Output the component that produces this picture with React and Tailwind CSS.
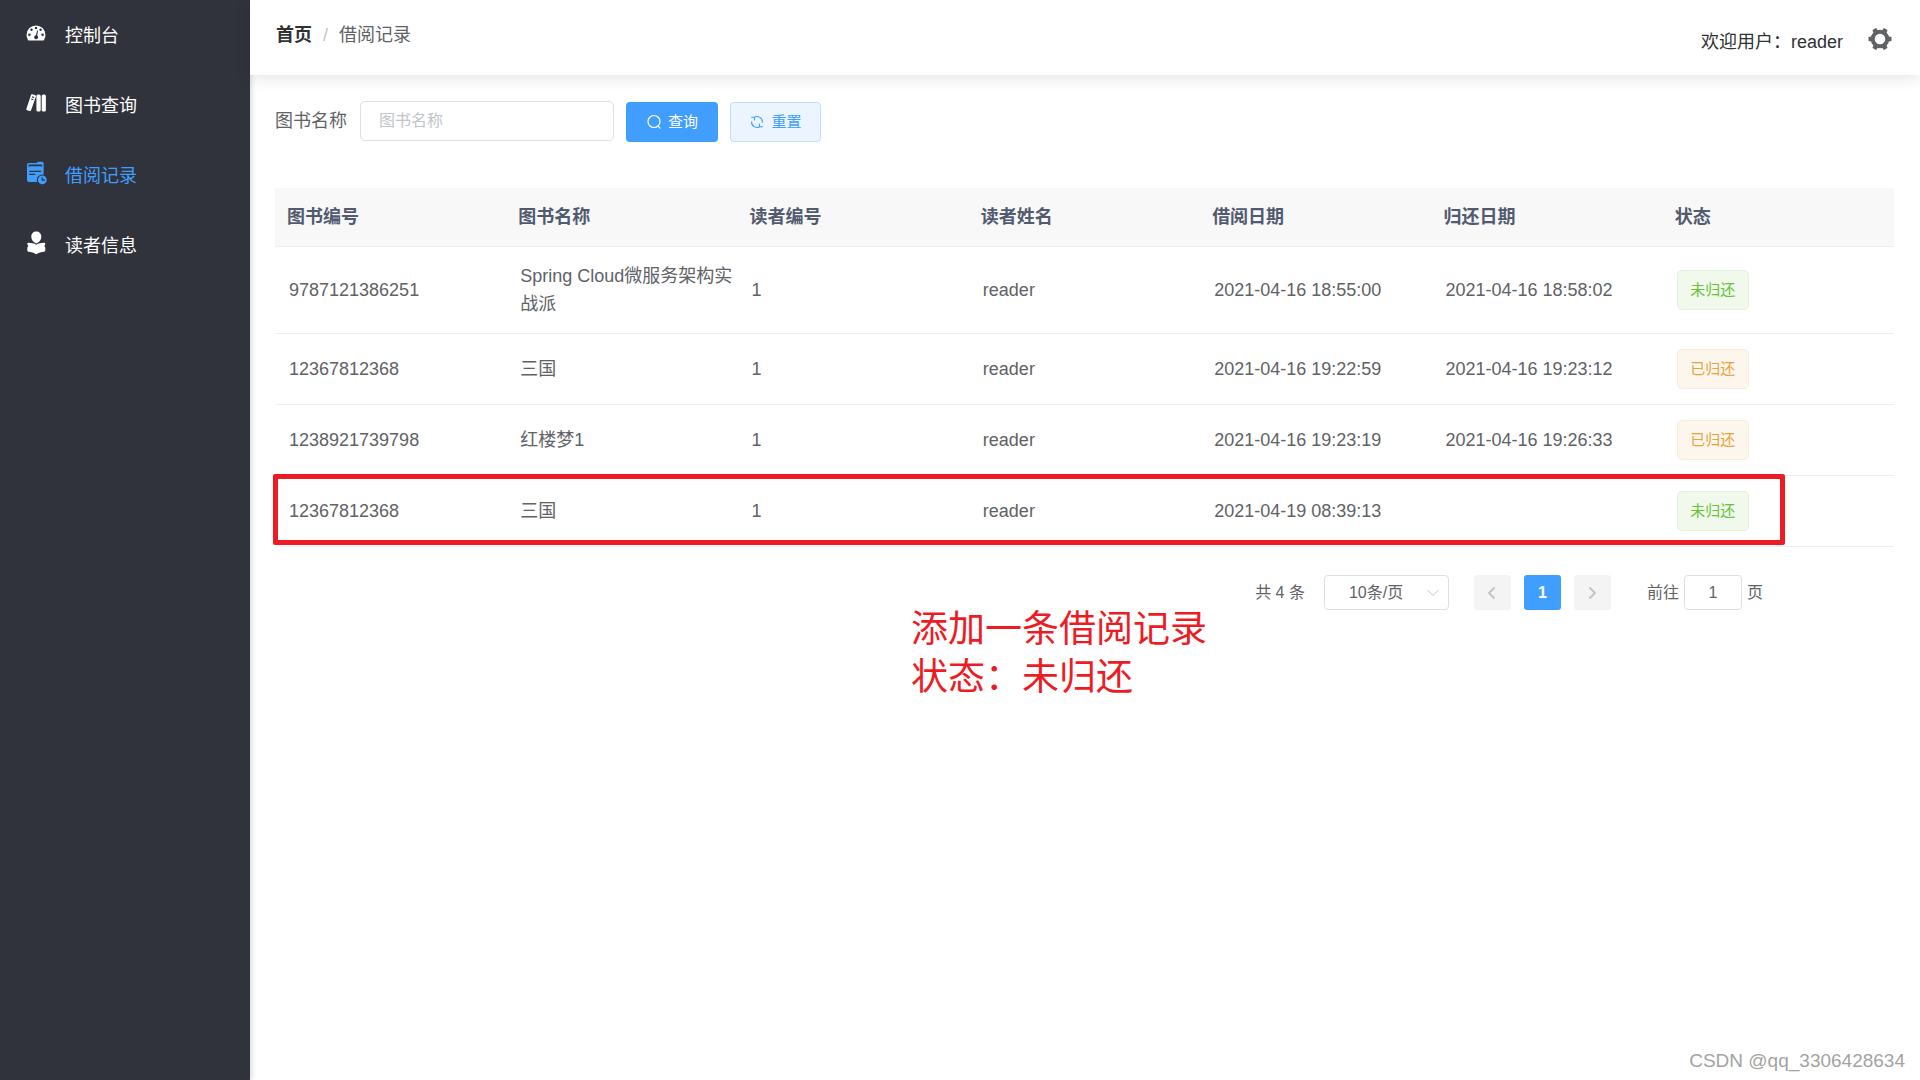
import React from "react";

function GaugeIcon() {
  return (
    <svg viewBox="0 0 20 20" className="h-5 w-5" fill="currentColor" aria-hidden="true">
      <path
        fillRule="evenodd"
        d="M10 2.4a9.4 9.4 0 0 0-9.4 9.3c0 2 .5 3.700 1.500 5.200.3.400.6.600 1.100.6h13.600c.5 0 .8-.2 1.100-.6 1-1.500 1.500-3.200 1.500-5.200A9.400 9.400 0 0 0 10 2.400ZM10 3.700a1.200 1.200 0 1 1 0 2.400 1.200 1.200 0 0 1 0-2.400ZM5.500 5.500a1.200 1.200 0 1 1 0 2.400 1.200 1.200 0 0 1 0-2.400ZM14.600 5.500a1.200 1.200 0 1 1 0 2.400 1.200 1.200 0 0 1 0-2.400ZM3.400 10.400a1.300 1.300 0 1 1 0 2.600 1.300 1.300 0 0 1 0-2.600ZM16.600 10.400a1.300 1.300 0 1 1 0 2.600 1.300 1.300 0 0 1 0-2.600ZM11.100 7.600l.9.200-.8 4.700a2 2 0 1 1-1.300-.3Z"
      />
    </svg>
  );
}

function BooksIcon() {
  return (
    <svg viewBox="0 0 20 20" className="h-5 w-5" fill="currentColor" aria-hidden="true">
      <path
        fillRule="evenodd"
        d="M6.300 1.200l3.100 1c.5.2.7.5.6 1L5.200 17.100c-.2.800-.7 1.100-1.400.9l-2.700-.8C.4 17 .2 16.500.4 15.800L5 1.900c.2-.6.600-.9 1.300-.7ZM6.200 3.200l-.4 1.200 2.100.7.400-1.200ZM5.400 5.600l-.3.900 2.100.7.300-.9Z"
      />
      <rect x="10.400" y="1.600" width="4.300" height="17" rx="1.500" />
      <rect x="15.700" y="1.600" width="4.200" height="17" rx="1.500" />
    </svg>
  );
}

function RecordIcon() {
  return (
    <svg viewBox="0 0 21 24" className="h-6 w-[21px]" aria-hidden="true">
      <path
        fill="currentColor"
        fillRule="evenodd"
        d="M3 2h7.500l1.500-1.200h4c1 0 1.600.6 1.600 1.500V21H3.200C1.900 21 1 20.300 1 19V4.300C1 2.900 1.700 2 3 2ZM3.600 3.600c-.8 0-1.100.5-1.100 1.400v1.600c.3-.9 1-1.300 2-1.300h10.600c.5 0 .9.200 1.100.4V4.900c0-.8-.5-1.300-1.300-1.300ZM3.200 9.700v1.300h12V9.700ZM3.200 12.700v1.200h6v-1.200Z"
      />
      <circle cx="16.300" cy="18.900" r="5.500" fill="#30333c" />
      <path
        fill="currentColor"
        fillRule="evenodd"
        d="M16.300 14.500a4.400 4.400 0 1 1 0 8.800 4.400 4.400 0 0 1 0-8.800Zm-.7 1.800v3.500h3.400v-1.200h-2.200v-2.300Z"
      />
    </svg>
  );
}

function ReaderIcon() {
  return (
    <svg viewBox="0 0 20 24" className="h-6 w-5" fill="currentColor" aria-hidden="true">
      <path d="M10.300.6c2.900 0 5 2.100 5 5 0 2.500-1.100 4.400-2.500 5.500l-2.500 1.500-2.500-1.500C6.400 10 5.300 8.100 5.300 5.600c0-2.900 2.100-5 5-5Z" />
      <path d="M2.600 11.800c3 .1 5.500.6 7.700 1.900 2.200-1.300 4.700-1.800 7.700-1.900.8 0 1.300.4 1.300 1.200 0 .9-.9 1-.9 1.800s.9 1 .9 2v2.700c0 .7-.4 1.100-1.100 1.300-3 .3-5.500.9-7.900 2.400-2.400-1.500-4.900-2.100-7.900-2.400-.7-.2-1.100-.6-1.100-1.300v-2.700c0-1 .9-1.200.9-2s-.9-.9-.9-1.800c0-.8.500-1.200 1.300-1.200Z" />
    </svg>
  );
}

function GearIcon() {
  return (
    <svg viewBox="0 0 24 24" className="h-6 w-6" aria-hidden="true">
      <g fill="currentColor">
        <rect x="0.500" y="9.700" width="23" height="4.600" rx="0.800" />
        <rect x="0.500" y="9.700" width="23" height="4.600" rx="0.800" transform="rotate(60 12 12)" />
        <rect x="0.500" y="9.700" width="23" height="4.600" rx="0.800" transform="rotate(120 12 12)" />
      </g>
      <circle cx="12" cy="12" r="7.300" fill="white" stroke="currentColor" strokeWidth="4" />
    </svg>
  );
}

function SearchIcon() {
  return (
    <svg viewBox="0 0 16 16" className="h-4 w-4" fill="none" stroke="currentColor" strokeWidth="1.200" strokeLinecap="round" aria-hidden="true">
      <circle cx="8" cy="7.500" r="6" />
      <path d="M12 12l2 2.200" />
    </svg>
  );
}

function RefreshIcon() {
  return (
    <svg viewBox="0 0 16 16" className="h-4 w-4" fill="none" stroke="currentColor" strokeWidth="1.100" strokeLinecap="round" strokeLinejoin="round" aria-hidden="true">
      <path d="M5.300 3.300A5.400 5.400 0 0 1 13.400 8.300M2.600 3.300h2.900v2.600M10.700 12.700A5.400 5.400 0 0 1 2.600 7.700M13.400 12.700h-2.900v-2.600" />
    </svg>
  );
}

function Chevron({ d, className }) {
  return (
    <svg viewBox="0 0 16 16" className={className} fill="none" stroke="currentColor" strokeLinecap="round" strokeLinejoin="round" aria-hidden="true">
      <path d={d} />
    </svg>
  );
}

const NAV = [
  { label: "控制台", Icon: GaugeIcon },
  { label: "图书查询", Icon: BooksIcon },
  { label: "借阅记录", Icon: RecordIcon, active: true },
  { label: "读者信息", Icon: ReaderIcon },
];

const COLUMNS = ["图书编号", "图书名称", "读者编号", "读者姓名", "借阅日期", "归还日期", "状态"];

const ROWS = [
  ["9787121386251", "Spring Cloud微服务架构实战派", "1", "reader", "2021-04-16 18:55:00", "2021-04-16 18:58:02", "未归还"],
  ["12367812368", "三国", "1", "reader", "2021-04-16 19:22:59", "2021-04-16 19:23:12", "已归还"],
  ["1238921739798", "红楼梦1", "1", "reader", "2021-04-16 19:23:19", "2021-04-16 19:26:33", "已归还"],
  ["12367812368", "三国", "1", "reader", "2021-04-19 08:39:13", "", "未归还"],
];

function StatusTag({ text }) {
  const tone =
    text === "未归还"
      ? "border-[#e1f3d8] bg-[#f0f9eb] text-[#67c23a]"
      : "border-[#faecd8] bg-[#fdf6ec] text-[#e6a23c]";
  return (
    <span className={"inline-flex h-10 w-[72px] items-center justify-center rounded-[5px] border align-middle text-[15px] " + tone}>
      {text}
    </span>
  );
}

function Sidebar() {
  return (
    <aside className="w-[250px] shrink-0 bg-[#30333c] shadow-[1px_0_6px_rgba(0,21,41,0.2)]">
      <nav>
        {NAV.map(({ label, Icon, active }) => (
          <a
            key={label}
            href="#"
            className={"flex h-[70px] items-center pl-[26px] text-[18px] " + (active ? "text-[#409eff]" : "text-white")}
          >
            <span className="flex h-6 w-[39px] items-center pb-1"><Icon /></span>
            <span className="pt-[2px]">{label}</span>
          </a>
        ))}
      </nav>
    </aside>
  );
}

function Header() {
  return (
    <header className="flex h-[75px] justify-between bg-white pr-7 pl-[26px] shadow-[0_2px_15px_rgba(0,0,0,0.12)]">
      <nav aria-label="breadcrumb" className="flex h-[70px] items-center text-[18px]">
        <a href="#" className="font-bold text-[#303133]">首页</a>
        <span className="mx-[11px] text-[#c0c4cc]">/</span>
        <span className="text-[#606266]">借阅记录</span>
      </nav>
      <div className="flex items-center gap-[25px] pt-[2px] text-[18px] text-[#303133]">
        <span className="pt-2">欢迎用户：reader</span>
        <button type="button" aria-label="设置" className="text-[#606266]"><GearIcon /></button>
      </div>
    </header>
  );
}

function SearchForm() {
  return (
    <form className="flex items-center text-[18px] text-[#606266]" onSubmit={(e) => e.preventDefault()}>
      <label htmlFor="book-name" className="mr-[13px]">图书名称</label>
      <input
        id="book-name"
        type="text"
        placeholder="图书名称"
        className="mr-3 h-10 w-[254px] rounded-[5px] border border-[#dcdfe6] bg-white px-[18px] text-[16px] placeholder:text-[#c0c4cc] focus:outline-none"
      />
      <div className="flex gap-3 pt-[2px]">
        <button type="submit" className="flex h-10 w-[92px] items-center justify-center gap-[6px] rounded-[4px] bg-[#409eff] text-[15px] text-white">
          <SearchIcon />查询
        </button>
        <button type="reset" className="flex h-10 w-[91px] items-center justify-center gap-[6px] rounded-[4px] border border-[#c0dfff] bg-[#ecf5ff] text-[15px] text-[#409eff]">
          <RefreshIcon />重置
        </button>
      </div>
    </form>
  );
}

function RecordTable() {
  return (
    <table className="w-full table-fixed border-separate border-spacing-0 text-left text-[18px] text-[#606266]">
      <thead>
        <tr>
          {COLUMNS.map((name) => (
            <th key={name} className="h-[59px] border-b border-[#ebeef5] bg-[#f8f8f9] pl-3 font-bold text-[#515a6e]">
              {name}
            </th>
          ))}
        </tr>
      </thead>
      <tbody>
        {ROWS.map((row, r) => (
          <tr key={r}>
            {row.map((cell, c) => (
              <td key={c} className="h-[71px] border-b border-[#ebeef5] py-[15px] pl-[14px] leading-7">
                {c === 6 ? <StatusTag text={cell} /> : cell}
              </td>
            ))}
          </tr>
        ))}
      </tbody>
    </table>
  );
}

function Pagination() {
  const square = "flex h-[35px] w-[37px] items-center justify-center rounded-[3px] ";
  return (
    <div className="flex items-center justify-end pr-[131px] text-[16px] text-[#606266]">
      <span className="mr-[19px]">共 4 条</span>
      <div className="relative mr-[25px]">
        <select aria-label="每页条数" className="h-[35px] w-[125px] appearance-none rounded-[4px] border border-[#dcdfe6] bg-white pr-10 pl-6 text-[16px] focus:outline-none">
          <option>10条/页</option>
        </select>
        <Chevron d="M3 5.500l5 5 5-5" className="pointer-events-none absolute top-[10px] right-2 h-4 w-4 text-[#c0c4cc]" />
      </div>
      <div className="flex gap-[13px]">
        <button type="button" aria-label="上一页" className={square + "bg-[#f4f4f5] text-[#c0c4cc]"}>
          <Chevron d="M10 3L5 8l5 5" className="h-4 w-4 stroke-2" />
        </button>
        <button type="button" className={square + "bg-[#409eff] font-bold text-white"}>1</button>
        <button type="button" aria-label="下一页" className={square + "bg-[#f4f4f5] text-[#c0c4cc]"}>
          <Chevron d="M6 3l5 5-5 5" className="h-4 w-4 stroke-2" />
        </button>
      </div>
      <label className="ml-9 flex items-center gap-[5px]">
        前往
        <input type="text" defaultValue="1" className="h-[35px] w-[58px] rounded-[4px] border border-[#dcdfe6] bg-white text-center text-[16px] focus:outline-none" />
        页
      </label>
    </div>
  );
}

export default function App() {
  return (
    <div className="flex min-h-screen bg-white font-['Liberation_Sans','Noto_Sans_CJK_SC',sans-serif]">
      <Sidebar />
      <div className="flex min-w-0 flex-1 flex-col">
        <Header />
        <main className="relative flex-1 pt-[25px] pr-[26px] pl-[25px]">
          <SearchForm />
          <div className="relative mt-[46px] mb-7">
            <RecordTable />
            <div className="pointer-events-none absolute right-[109px] bottom-[2px] -left-[2px] h-[71px] rounded-[2px] border-5 border-[#ed1c24]" />
          </div>
          <Pagination />
          <p className="absolute top-[531px] left-[661px] text-[37px] leading-[48px] text-[#ed1c24]">
            添加一条借阅记录
            <br />
            状态：未归还
          </p>
        </main>
        <footer className="flex justify-end pr-[15px] pb-[7px] text-[19px] leading-6 text-[#a3a3a3]">
          CSDN @qq_3306428634
        </footer>
      </div>
    </div>
  );
}
